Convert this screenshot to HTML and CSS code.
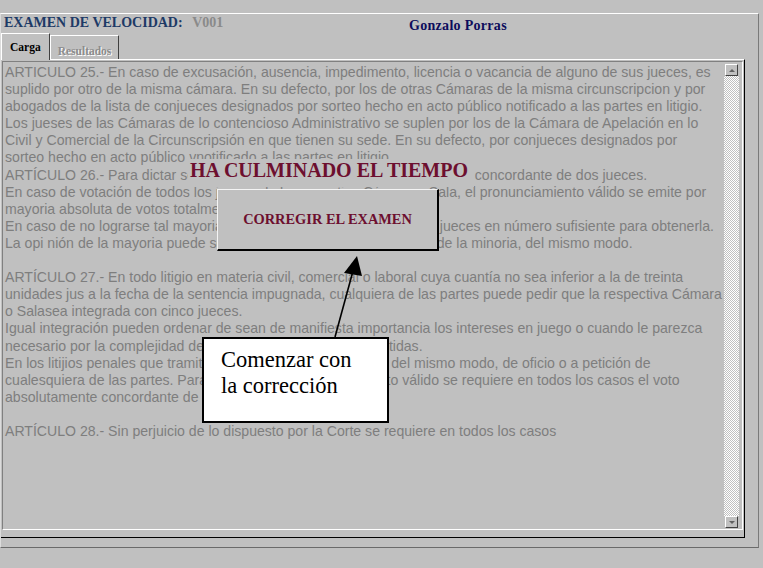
FILE: index.html
```html
<!DOCTYPE html>
<html lang="es">
<head>
  <meta charset="UTF-8">
  <title>Examen de velocidad</title>
  <link rel="stylesheet" href="styles.css">
</head>
<body>

  <div class="screen">
    <div class="window">
      <!-- Cabecera -->
      <div class="topbar">
        <div class="exam-id">
          <span class="exam-title">EXAMEN DE VELOCIDAD:</span>
          <span class="exam-code">V001</span>
        </div>
        <span class="student">Gonzalo Porras</span>
      </div>

      <!-- Pestañas -->
      <div class="tabs">
        <div class="tab active">Carga</div>
        <div class="tab disabled">Resultados</div>
      </div>

      <!-- Texto del examen -->
      <div class="tab-panel">
        <div class="editor">
          <div class="editor-text">
            ARTICULO 25.- En caso de excusación, ausencia, impedimento, licencia o vacancia de alguno de sus jueces, es<br>
            suplido por otro de la misma cámara. En su defecto, por los de otras Cámaras de la misma circunscripcion y por<br>
            abogados de la lista de conjueces designados por sorteo hecho en acto público notificado a las partes en litigio.<br>
            Los jueses de las Cámaras de lo contencioso Administrativo se suplen por los de la Cámara de Apelación en lo<br>
            Civil y Comercial de la Circunscripsión en que tienen su sede. En su defecto, por conjueces designados por<br>
            sorteo hecho en acto público vnotificado a las partes en litigio.<br>
            ARTÍCULO 26.- Para dictar sentencia en los procesos se requiere del voto concordante de dos jueces.<br>
            En caso de votación de todos los jueces de la respectiva Cámara o Sala, el pronunciamiento válido se emite por<br>
            mayoria absoluta de votos totalmente concordantes.<br>
            En caso de no lograrse tal mayoria, se integrará la Cámara con otros jueces en número sufisiente para obtenerla.<br>
            La opi nión de la mayoria puede ser fundada por alguno de ellos y la de la minoria, del mismo modo.<br>
            <br>
            ARTÍCULO 27.- En todo litigio en materia civil, comercial o laboral cuya cuantía no sea inferior a la de treinta<br>
            unidades jus a la fecha de la sentencia impugnada, cualquiera de las partes puede pedir que la respectiva Cámara<br>
            o Salasea integrada con cinco jueces.<br>
            Igual integración pueden ordenar de sean de manifiesta importancia los intereses en juego o cuando le parezca<br>
            necesario por la complejidad de las cuestiones penales sometidas.<br>
            En los litijios penales que tramitan las Cámaras se procederá del mismo modo, de oficio o a petición de<br>
            cualesquiera de las partes. Para que exista el pronunciamiento válido se requiere en todos los casos el voto<br>
            absolutamente concordante de tres jueces.<br>
            <br>
            ARTÍCULO 28.- Sin perjuicio de lo dispuesto por la Corte se requiere en todos los casos
          </div>
          <div class="scrollbar">
            <div class="sb-btn"><span class="arrow-up"></span></div>
            <div class="sb-track"></div>
            <div class="sb-btn"><span class="arrow-down"></span></div>
          </div>
        </div>
      </div>
    </div>

    <!-- Aviso de fin de tiempo -->
    <div class="time-up">HA CULMINADO EL TIEMPO</div>
    <div class="dialog">CORREGIR EL EXAMEN</div>

    <svg class="pointer" width="763" height="568" viewBox="0 0 763 568">
      <line x1="335" y1="337" x2="353" y2="271" stroke="#000" stroke-width="1.6"/>
      <polygon points="357,256 344,273 362,276" fill="#000"/>
    </svg>

    <div class="callout">Comenzar con<br>la corrección</div>
  </div>

</body>
</html>
```

FILE: styles.css
```css
body {
  margin: 0;
  background: #c0c0c0;
}

.screen {
  position: relative;
  width: 763px;
  height: 568px;
  overflow: hidden;
}

.window {
  margin-top: 13px;
  width: 759px;
  height: 535px;
  box-sizing: border-box;
  border-top: 1px solid #ffffff;
  border-left: 1px solid #dcdcdc;
  border-right: 1px solid #7a7a7a;
  border-bottom: 1px solid #6a6a6a;
  display: flex;
  flex-direction: column;
}

/* cabecera */
.topbar {
  height: 19px;
  box-sizing: border-box;
  padding: 2px 0 0 3px;
  display: flex;
  align-items: flex-start;
  font-family: "Liberation Serif", serif;
  font-weight: bold;
  font-size: 14px;
  line-height: 14px;
}

.exam-id {
  width: 405px;
}

.exam-title {
  color: #1d3a66;
}

.exam-code {
  color: #8a8a8a;
  margin-left: 6px;
}

.student {
  color: #0c0c5c;
  margin-top: 3px;
  letter-spacing: 0.3px;
}

/* pestañas */
.tabs {
  height: 26px;
  display: flex;
  align-items: flex-end;
  position: relative;
  z-index: 1;
}

.tab {
  box-sizing: border-box;
  padding: 7px 8px 0;
  border-top: 1px solid #ffffff;
  border-left: 1px solid #ffffff;
  border-right: 1px solid #404040;
  font-family: "Liberation Serif", serif;
  font-weight: bold;
  font-size: 11.5px;
  line-height: 12px;
}

.tab.active {
  height: 27px;
  margin-bottom: -1px;
  background: #c0c0c0;
  color: #000;
}

.tab.disabled {
  height: 24px;
  padding: 9px 7px 0;
  color: #8c8c8c;
  text-shadow: 1px 1px 0 #ffffff;
}

/* panel con el texto */
.tab-panel {
  width: 744px;
  height: 479px;
  box-sizing: border-box;
  border-top: 1px solid #ffffff;
  border-right: 1px solid #000;
  border-bottom: 1px solid #000;
  padding: 1px 1px 7px 1px;
}

.editor {
  height: 100%;
  box-sizing: border-box;
  display: flex;
  border-top: 1px solid #808080;
  border-left: 1px solid #808080;
  border-right: 1px solid #ffffff;
  border-bottom: 1px solid #ffffff;
}

.editor-text {
  flex: 1;
  padding: 2px 0 0 2px;
  font-family: "Liberation Sans", Arial, sans-serif;
  font-size: 14.1px;
  line-height: 17.1px;
  color: #7e7e7e;
  white-space: nowrap;
  overflow: hidden;
}

.scrollbar {
  width: 15px;
  margin: 2px 3px 1px 0;
  display: flex;
  flex-direction: column;
  align-items: center;
}

.sb-track {
  flex: 1;
  width: 15px;
  background: repeating-conic-gradient(#ffffff 0 25%, #c0c0c0 0 50%) 0 0 / 2px 2px;
}

.sb-btn {
  width: 13px;
  height: 12px;
  box-sizing: border-box;
  background: #c0c0c0;
  border-top: 1px solid #ffffff;
  border-left: 1px solid #ffffff;
  border-right: 1px solid #404040;
  border-bottom: 1px solid #404040;
  display: flex;
  align-items: center;
  justify-content: center;
}

.arrow-up {
  border-left: 3px solid transparent;
  border-right: 3px solid transparent;
  border-bottom: 3px solid #606060;
}

.arrow-down {
  border-left: 3px solid transparent;
  border-right: 3px solid transparent;
  border-top: 3px solid #606060;
}

/* aviso superpuesto */
.time-up {
  position: absolute;
  left: 188px;
  top: 159px;
  width: 286px;
  height: 28px;
  box-sizing: border-box;
  padding-left: 2px;
  background: #c0c0c0;
  font-family: "Liberation Serif", serif;
  font-weight: bold;
  font-size: 20px;
  line-height: 22px;
  color: #6d0f2f;
}

.dialog {
  position: absolute;
  left: 217px;
  top: 189px;
  width: 222px;
  height: 62px;
  box-sizing: border-box;
  background: #c0c0c0;
  border-top: 1px solid #f4f4f4;
  border-left: 1px solid #f4f4f4;
  border-right: 2px solid #000;
  border-bottom: 2px solid #000;
  display: flex;
  align-items: center;
  justify-content: center;
  font-family: "Liberation Serif", serif;
  font-weight: bold;
  font-size: 14.4px;
  color: #6d0f2f;
}

.pointer {
  position: absolute;
  left: 0;
  top: 0;
}

.callout {
  position: absolute;
  left: 202px;
  top: 337px;
  width: 187px;
  height: 86px;
  box-sizing: border-box;
  padding: 8px 0 0 17px;
  background: #ffffff;
  border: 2px solid #000;
  font-family: "Liberation Serif", serif;
  font-size: 22.5px;
  line-height: 26px;
  color: #000;
}
```
